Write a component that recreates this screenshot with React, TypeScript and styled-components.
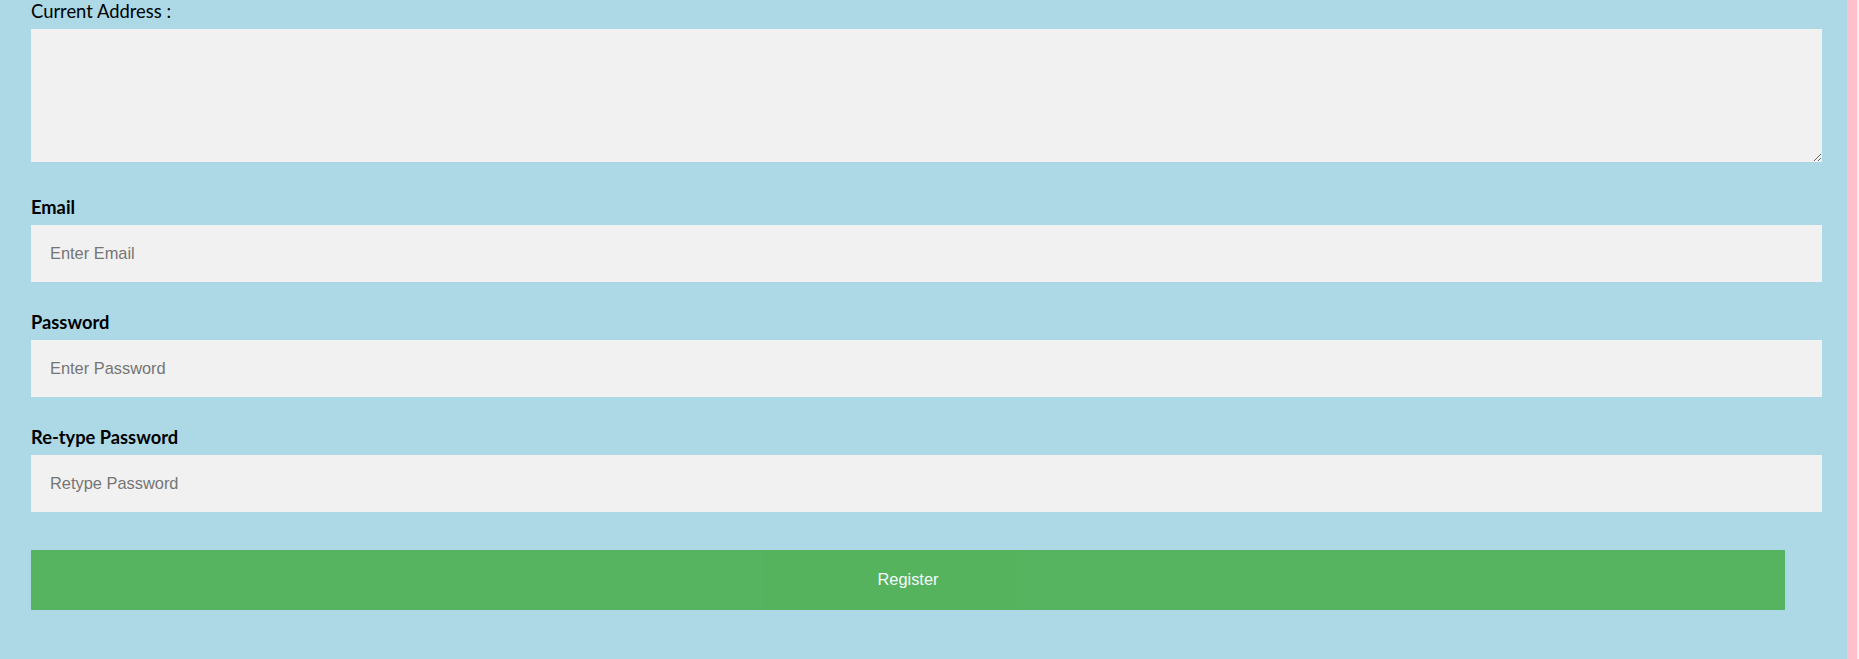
import React from "react";
import styled, { createGlobalStyle } from "styled-components";

const Global = createGlobalStyle`
  html, body { margin: 0; padding: 0; }
  body { background: #f1f1f1; }
`;

const Page = styled.div`
  display: flex;
  height: 659px;
  overflow: hidden;
`;

const Main = styled.div`
  width: 1847px;
  background: #add8e6;
  padding: 1px 25px 0 31px;
  box-sizing: border-box;
  display: flex;
  flex-direction: column;
`;

const Strip = styled.div`
  width: 10px;
  background: #ffc0cb;
`;

const AddressLabel = styled.label`
  font-family: Lato, "Open Sans", sans-serif;
  font-size: 18.4px;
  line-height: 20px;
  color: #000;
  margin-bottom: 8px;
`;

const Area = styled.textarea`
  height: 133px;
  width: 100%;
  box-sizing: border-box;
  border: none;
  background: #f1f1f1;
  margin: 0;
  padding: 0;
  outline: none;
`;

const Label = styled.label<{ $gap: number }>`
  display: block;
  font-family: Lato, "Open Sans", sans-serif;
  font-weight: 700;
  font-size: 18.3px;
  line-height: 20px;
  color: #000;
  margin-top: ${(p) => p.$gap}px;
  margin-bottom: 8px;
`;

const Input = styled.input`
  height: 57px;
  width: 100%;
  box-sizing: border-box;
  border: none;
  background: #f1f1f1;
  margin: 0;
  padding: 0 19px 1px;
  font-family: Arial, "Liberation Sans", sans-serif;
  font-size: 16.4px;
  outline: none;
  &::placeholder { color: #757575; }
`;

const Button = styled.button`
  margin-top: 38px;
  width: 1754px;
  height: 60px;
  border: none;
  background: #4caf50;
  opacity: 0.9;
  color: #fff;
  font-family: Arial, "Liberation Sans", sans-serif;
  font-size: 16.4px;
  padding: 0 0 2px;
  cursor: pointer;
`;

export default function App() {
  return (
    <Page>
      <Global />
      <Main>
        <AddressLabel>Current Address :</AddressLabel>
        <Area />
        <Label $gap={35}>Email</Label>
        <Input type="text" placeholder="Enter Email" />
        <Label $gap={30}>Password</Label>
        <Input type="password" placeholder="Enter Password" />
        <Label $gap={30}>Re-type Password</Label>
        <Input type="password" placeholder="Retype Password" />
        <Button>Register</Button>
      </Main>
      <Strip />
    </Page>
  );
}
